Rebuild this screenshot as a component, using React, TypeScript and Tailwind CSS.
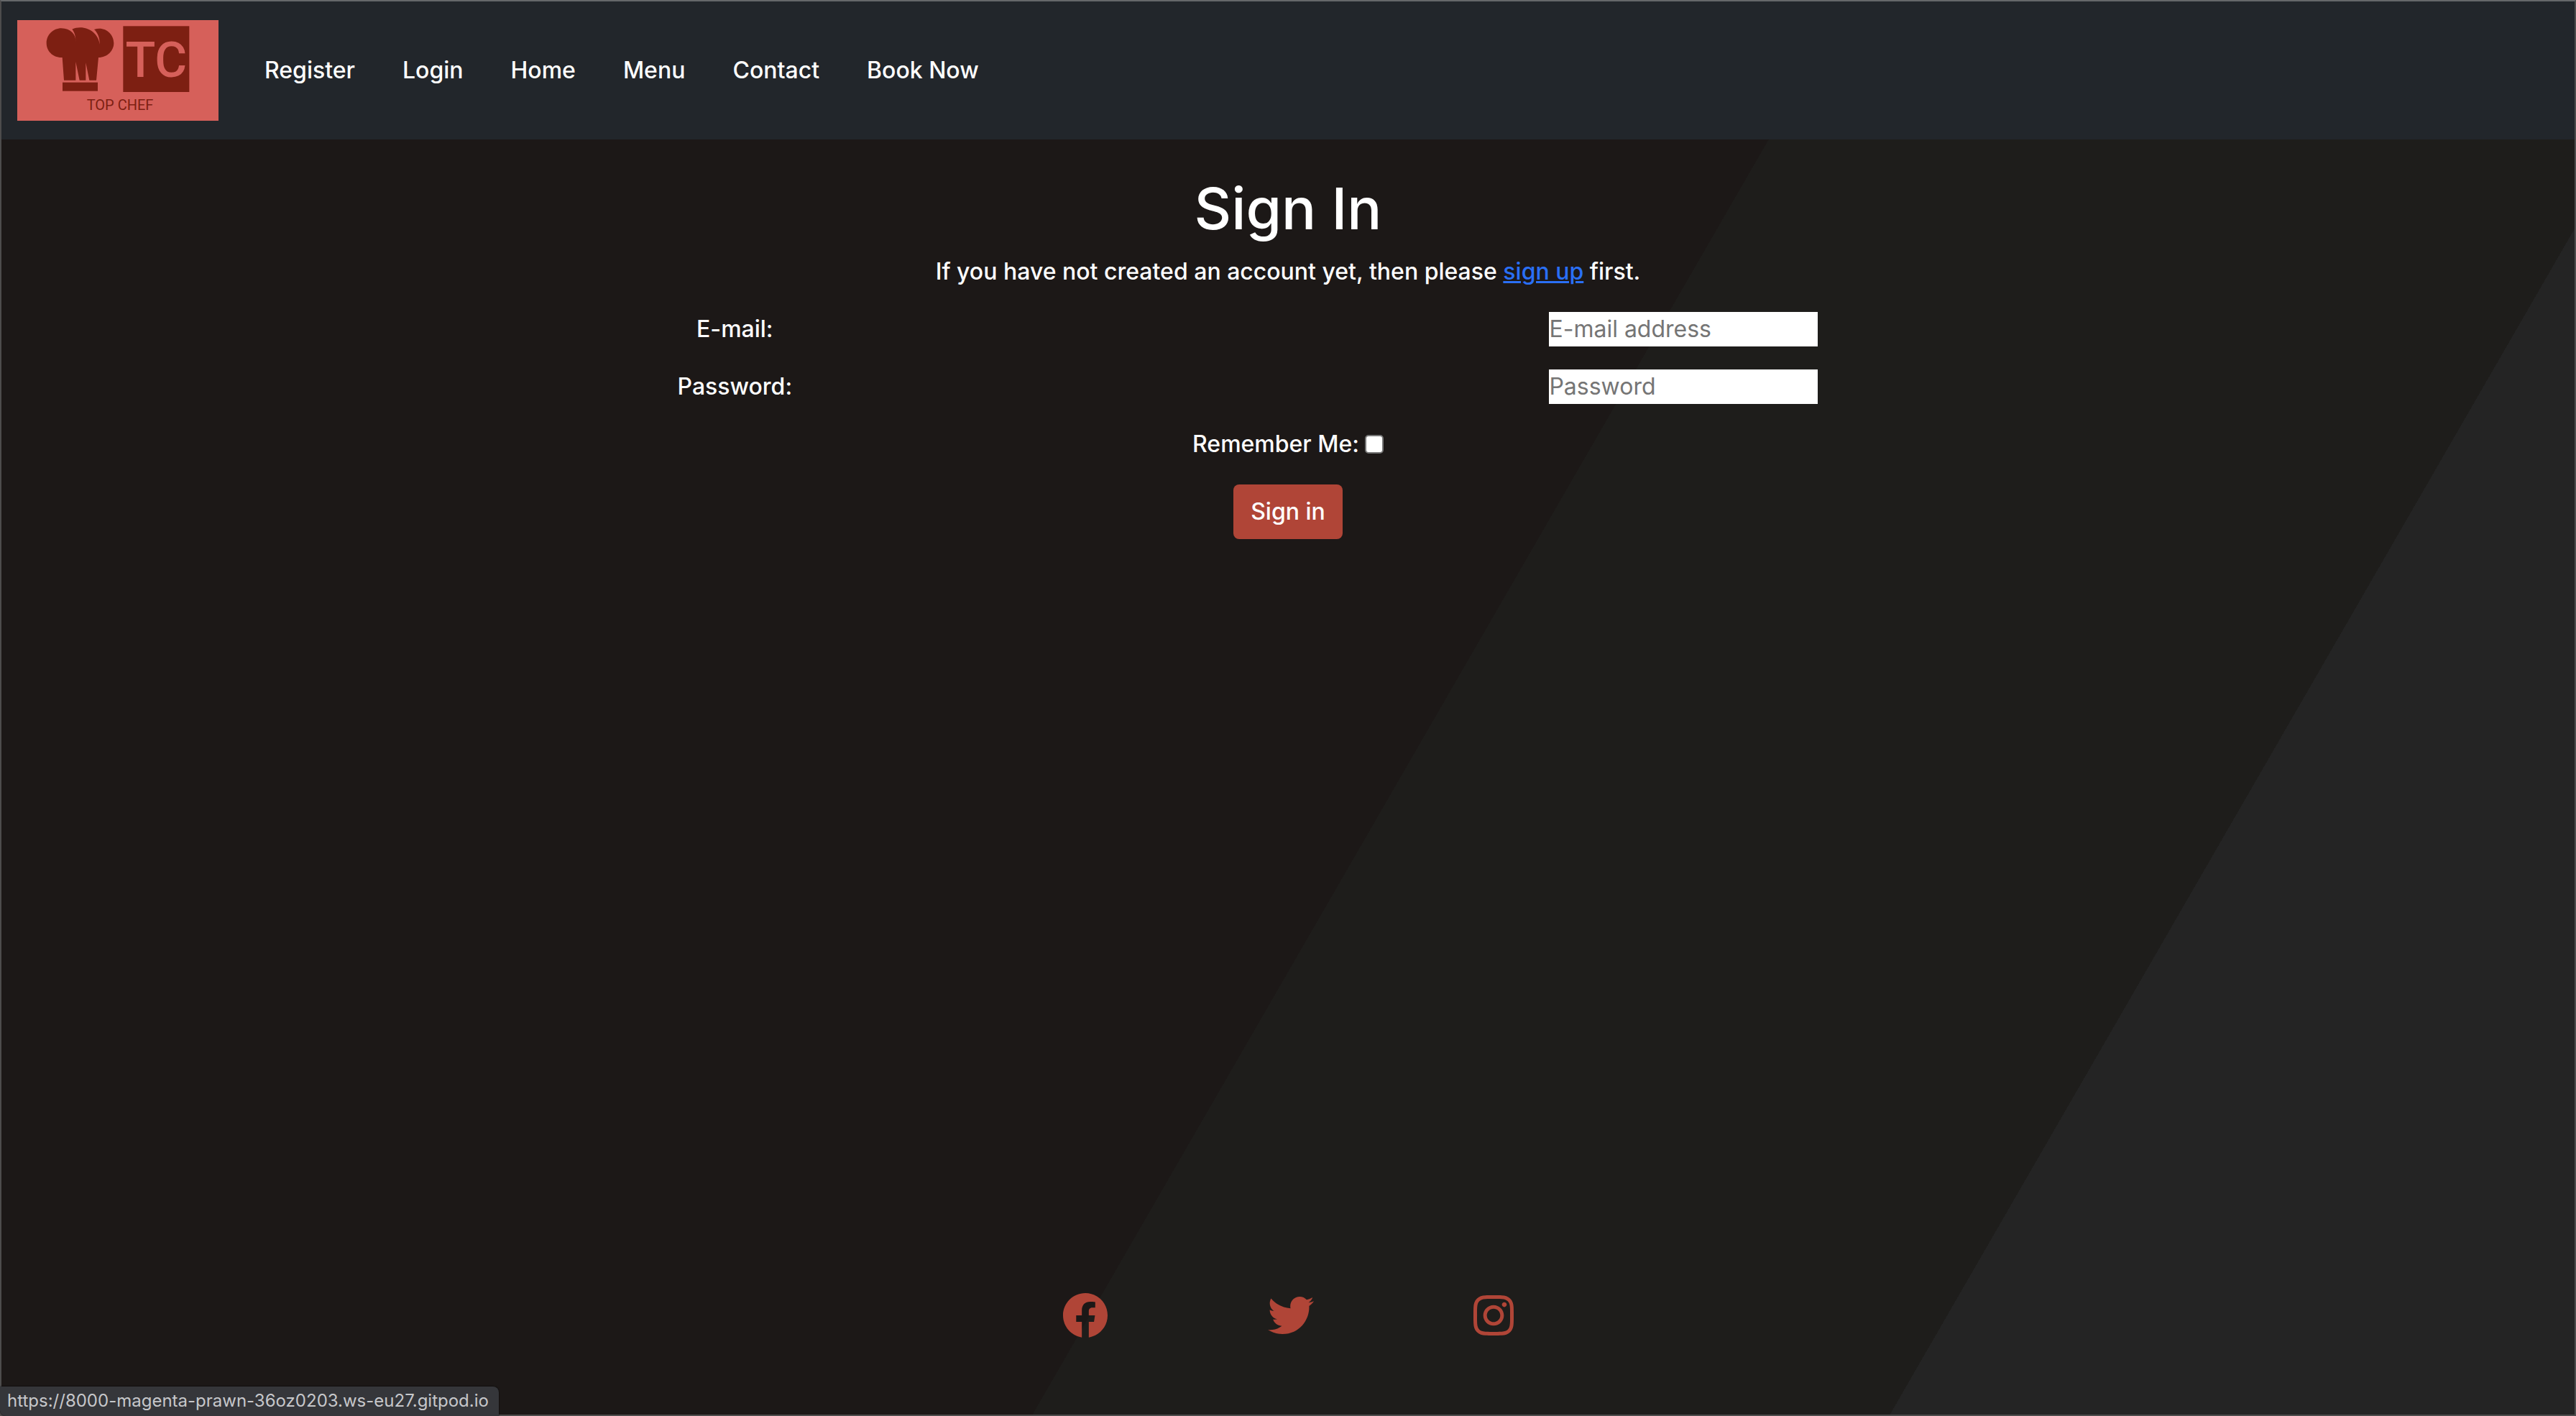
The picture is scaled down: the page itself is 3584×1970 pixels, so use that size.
import { FaFacebook, FaInstagram, FaTwitter } from "react-icons/fa";

const navLinks = ["Register", "Login", "Home", "Menu", "Contact", "Book Now"];

function Logo() {
  return (
    <svg viewBox="72 84 840 420" className="h-35 w-70" role="img" aria-label="Top Chef">
      <rect x="72" y="84" width="840" height="420" fill="#d6605a" />
      <g fill="#7d1f12">
        <path d="M256 118C294 119 317 142 317 176C316 152 311 134 301 122C352 100 411 132 416 186C417 158 408 137 393 123C436 108 475 140 475 180C475 212 448 240 411 240L402 335H373L358 262V335H332L316 258V335H267L260 240C222 242 194 214 194 180C194 145 222 118 256 118Z" />
        <rect x="261" y="344" width="147" height="36" />
        <rect x="514" y="109" width="276" height="275" />
      </g>
      <text
        x="652"
        y="320"
        textAnchor="middle"
        fill="#d6605a"
        fontSize="206"
        className="font-[Roboto,sans-serif] font-medium"
      >
        TC
      </text>
      <text
        x="501"
        y="459"
        textAnchor="middle"
        fill="#7d1f12"
        fontSize="60"
        className="font-[Roboto,sans-serif] font-normal"
      >
        TOP CHEF
      </text>
    </svg>
  );
}

function Field({ id, label, type, placeholder }: { id: string; label: string; type: string; placeholder: string }) {
  return (
    <div className="flex h-12 w-full items-center justify-between">
      <label htmlFor={id} className="w-[14%] text-center">
        {label}
      </label>
      <div className="flex w-[38.5%] justify-center">
        <input
          id={id}
          type={type}
          placeholder={placeholder}
          className="h-12 w-[374px] bg-white font-normal text-black placeholder:text-[#757575]"
        />
      </div>
    </div>
  );
}

export default function App() {
  return (
    <div className="relative flex min-h-screen flex-col border-2 border-[#4d4c4c] border-t-[#65676a] bg-[linear-gradient(120deg,#1c1817_54.5%,#1e1d1b_54.5%,#1e1d1b_79.8%,#242424_79.8%)] font-[Inter,sans-serif] text-[32px] leading-12 font-medium text-white">
      <nav className="flex h-48 items-center bg-[#22262b] px-[22px]">
        <a href="#home" className="mr-8">
          <Logo />
        </a>
        <ul className="flex gap-0.5">
          {navLinks.map((name) => (
            <li key={name}>
              <a href="#" className="block px-8">
                {name}
              </a>
            </li>
          ))}
        </ul>
      </nav>

      <main className="flex flex-1 flex-col items-center pt-12">
        <h1 className="mb-4 text-[80px] leading-24">Sign In</h1>
        <p>
          If you have not created an account yet, then please{" "}
          <a href="#signup" className="text-[#2a6ff5] underline">
            sign up
          </a>{" "}
          first.
        </p>
        <form className="mt-8 flex w-1/2 flex-col items-center gap-8" onSubmit={(e) => e.preventDefault()}>
          <Field id="email" label="E-mail:" type="email" placeholder="E-mail address" />
          <Field id="password" label="Password:" type="password" placeholder="Password" />
          <div className="flex items-center gap-2">
            <label htmlFor="remember">Remember Me:</label>
            <input
              id="remember"
              type="checkbox"
              className="size-[26px] appearance-none rounded-[5px] border-2 border-[#767676] bg-white checked:bg-[#2a6ff5]"
            />
          </div>
          <button type="submit" className="h-[76px] rounded-lg bg-[#b04537] px-6">
            Sign in
          </button>
        </form>
      </main>

      <footer className="flex justify-center gap-[222px] pb-[106px] text-[#b04537]">
        <a href="#facebook" aria-label="Facebook">
          <FaFacebook className="size-16" />
        </a>
        <a href="#twitter" aria-label="Twitter">
          <FaTwitter className="size-16" />
        </a>
        <a href="#instagram" aria-label="Instagram">
          <FaInstagram className="h-16 w-14" viewBox="0 0 448 512" />
        </a>
      </footer>

      <div className="absolute -bottom-0.5 -left-0.5 h-[41px] rounded-tr-lg rounded-bl-lg bg-[#35363a] pr-3.5 pl-2.5 text-2xl leading-10 font-normal text-[#c6c7ca] shadow-[0_0_2px_#000]">
        https://8000-magenta-prawn-36oz0203.ws-eu27.gitpod.io
      </div>
    </div>
  );
}
